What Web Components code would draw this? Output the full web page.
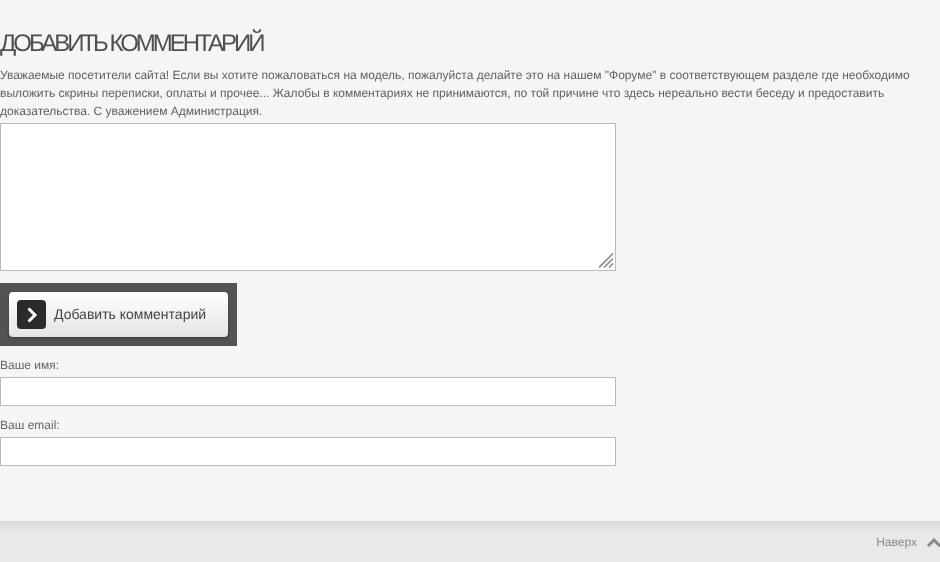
<!DOCTYPE html>
<html lang="ru">
<head>
<meta charset="utf-8">
<title>Добавить комментарий</title>
<style>
html, body { margin: 0; padding: 0; height: 100%; overflow: hidden; }
body { background: #f5f5f5; font-family: "Liberation Sans", Arial, sans-serif; text-rendering: geometricPrecision; }
</style>
</head>
<body>
<comment-page>
    <comment-form>
        <span slot="title">Добавить комментарий</span>
        <span slot="notice">Уважаемые посетители сайта! Если вы хотите пожаловаться на модель, пожалуйста делайте это на нашем "Форуме" в соответствующем разделе где необходимо выложить скрины переписки, оплаты и прочее... Жалобы в комментариях не принимаются, по той причине что здесь нереально вести беседу и предоставить доказательства. С уважением Администрация.</span>
    </comment-form>
    <page-footer slot="footer">Наверх</page-footer>
</comment-page>

<script>
class CommentPage extends HTMLElement {
    constructor(){
        super()
        this.attachShadow({mode: "open"})
        this.shadowRoot.innerHTML = `<style>
        :host{
            display: flex;
            flex-direction: column;
            height: 562px;
        }
        main{
            flex: 1;
        }
        </style>
        <main><slot></slot></main>
        <slot name="footer"></slot>`
    }
}

class CommentForm extends HTMLElement {
    constructor(){
        super()
        this.attachShadow({mode: "open"})
        this.shadowRoot.innerHTML = `<style>
        :host{
            display: block;
            padding-top: 30px;
            color: #606060;
            font-size: 12px;
            line-height: 18px;
            will-change: transform;
        }
        h2{
            margin: 0 0 8px;
            font-size: 24px;
            line-height: 28px;
            font-weight: normal;
            letter-spacing: -3px;
            text-transform: uppercase;
            color: #4f4f4f;
        }
        p{
            margin: 0;
        }
        .box{
            position: relative;
            width: 616px;
            height: 148px;
            margin: 3px 0 12px;
        }
        textarea{
            display: block;
            box-sizing: border-box;
            width: 100%;
            height: 100%;
            padding: 2px;
            border: 1px solid #bbb;
            border-radius: 0;
            background: #fff;
            outline: none;
            resize: none;
        }
        .grip{
            position: absolute;
            right: 2px;
            bottom: 3px;
            width: 15px;
            height: 15px;
        }
        </style>
        <h2><slot name="title"></slot></h2>
        <p><slot name="notice"></slot></p>
        <div class="box">
            <textarea></textarea>
            <svg class="grip" viewBox="0 0 15 15"><path d="M0 14.5L14 .5M5 14.5l9-9M10 14.5l4-4" fill="none" stroke="#8a8a8a" stroke-width="1.6"/></svg>
        </div>
        <submit-button>Добавить комментарий</submit-button>
        <text-field label="Ваше имя:"></text-field>
        <text-field label="Ваш email:"></text-field>`
    }
}

class SubmitButton extends HTMLElement {
    constructor(){
        super()
        this.attachShadow({mode: "open"})
        this.shadowRoot.innerHTML = `<style>
        :host{
            display: block;
            box-sizing: border-box;
            width: 237px;
            height: 63px;
            padding: 9px;
            background: #535353;
        }
        button{
            display: flex;
            align-items: center;
            gap: 8px;
            box-sizing: border-box;
            width: 219px;
            height: 45px;
            padding: 0 0 0 8px;
            border: none;
            border-radius: 4px;
            background: linear-gradient(#ffffff, #e4e4e4);
            box-shadow: 0 1px 3px rgba(0,0,0,.35);
            font: 14px "Liberation Sans", Arial, sans-serif;
            text-rendering: geometricPrecision;
            color: #444;
        }
        span{
            margin-bottom: 2px;
        }
        .icon{
            display: block;
            flex: none;
            width: 29px;
            height: 29px;
            border-radius: 4px;
            background: #2b2b2b;
        }
        </style>
        <button type="button">
            <svg class="icon" viewBox="0 0 29 29"><path d="M11.5 8.5l6.5 6.5-6.5 6.5" fill="none" stroke="#fff" stroke-width="3"/></svg>
            <span><slot></slot></span>
        </button>`
    }
}

class TextField extends HTMLElement {
    constructor(){
        super()
        this.attachShadow({mode: "open"})
        this.shadowRoot.innerHTML = `<style>
        :host{
            display: block;
            color: #666;
            font-size: 12px;
            line-height: 18px;
        }
        label{
            display: block;
            padding: 10px 0 3px;
        }
        input{
            display: block;
            box-sizing: border-box;
            width: 616px;
            height: 29px;
            padding: 2px;
            border: 1px solid #bbb;
            border-radius: 0;
            background: #fff;
            outline: none;
        }
        </style>
        <label></label>
        <input type="text">`
        this.shadowRoot.querySelector('label').textContent = this.getAttribute('label')
    }
}

class PageFooter extends HTMLElement {
    constructor(){
        super()
        this.attachShadow({mode: "open"})
        this.shadowRoot.innerHTML = `<style>
        :host{
            display: flex;
            justify-content: flex-end;
            align-items: center;
            gap: 10px;
            box-sizing: border-box;
            height: 41px;
            padding-top: 1px;
            background: linear-gradient(#dadada, #e9e9e9 12px);
            color: #888;
            font-size: 12px;
            will-change: transform;
        }
        svg{
            display: block;
            width: 14px;
            height: 9px;
            margin-right: -1px;
        }
        </style>
        <span><slot></slot></span>
        <svg viewBox="0 0 14 9"><path d="M1 8L7 2l6 6" fill="none" stroke="#888" stroke-width="3"/></svg>`
    }
}

customElements.define('submit-button', SubmitButton);
customElements.define('text-field', TextField);
customElements.define('comment-form', CommentForm);
customElements.define('page-footer', PageFooter);
customElements.define('comment-page', CommentPage);
</script>
</body>
</html>
